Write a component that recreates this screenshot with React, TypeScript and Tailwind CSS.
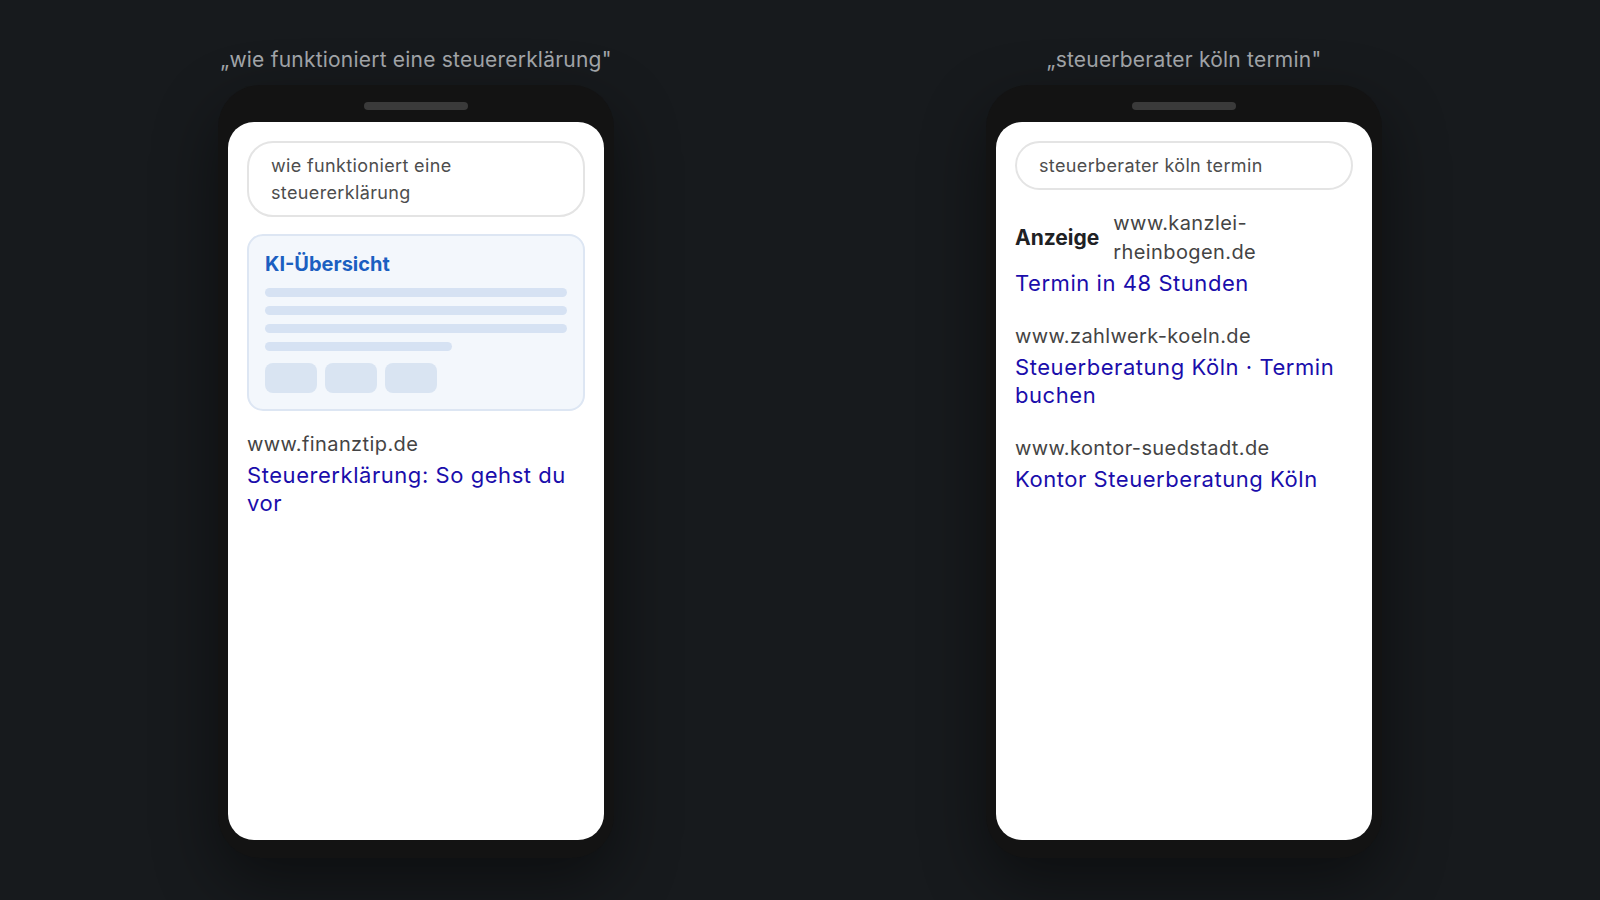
import type { ReactNode } from 'react';

type Result = {
  url: string;
  title: string;
};

const organic: Result[] = [
  { url: 'www.zahlwerk-koeln.de', title: 'Steuerberatung Köln · Termin buchen' },
  { url: 'www.kontor-suedstadt.de', title: 'Kontor Steuerberatung Köln' },
];

function Phone({ query, children }: { query: string; children: ReactNode }) {
  return (
    <div className="flex flex-col items-center">
      <p className="text-[21px] leading-7 tracking-[0.01em] text-[#a4a7ab]">„{query}"</p>
      <div className="mt-[11px] w-[396px] rounded-[42px] bg-[#131313] px-[10px] pt-[17px] pb-[18px] shadow-[0_24px_64px_rgba(0,0,0,0.45)]">
        <div className="mx-auto h-2 w-[104px] rounded-full bg-[#3a3a3a]" />
        <div className="mt-3 h-[718px] rounded-[26px] bg-white px-[19px] pt-[19px]">
          <div className="rounded-[26px] border-2 border-[#e4e4e4] px-[22px] py-[9px] text-[18px] leading-[27px] tracking-[0.02em] text-[#4d4d4d]">
            {query}
          </div>
          {children}
        </div>
      </div>
    </div>
  );
}

function ResultItem({ url, title }: Result) {
  return (
    <div>
      <div className="text-[20px] leading-7 tracking-[0.02em] text-[#444]">{url}</div>
      <div className="mt-[3px] text-[22px] leading-7 tracking-[0.025em] text-[#1a0dab]">{title}</div>
    </div>
  );
}

export default function App() {
  return (
    <div className="min-h-screen w-full bg-[#171a1d] font-['Inter',sans-serif]">
      <div className="mx-auto grid max-w-[1536px] grid-cols-2 pt-[46px]">
        <Phone query="wie funktioniert eine steuererklärung">
          {/* AI overview placeholder */}
          <div className="mt-[17px] rounded-2xl border-2 border-[#dde6f3] bg-[#f3f7fc] px-4 pt-3.5 pb-4">
            <div className="text-[20px] font-bold leading-7 text-[#1b5fc1]">KI-Übersicht</div>
            <div className="mt-[10px] flex flex-col gap-[9px]">
              <div className="h-[9px] rounded-full bg-[#d6e2f3]" />
              <div className="h-[9px] rounded-full bg-[#d6e2f3]" />
              <div className="h-[9px] rounded-full bg-[#d6e2f3]" />
              <div className="h-[9px] w-[62%] rounded-full bg-[#d6e2f3]" />
            </div>
            <div className="mt-3 flex gap-2">
              <div className="h-[30px] w-[52px] rounded-lg bg-[#d9e4f2]" />
              <div className="h-[30px] w-[52px] rounded-lg bg-[#d9e4f2]" />
              <div className="h-[30px] w-[52px] rounded-lg bg-[#d9e4f2]" />
            </div>
          </div>
          <div className="mt-[19px]">
            <ResultItem url="www.finanztip.de" title="Steuererklärung: So gehst du vor" />
          </div>
        </Phone>

        <Phone query="steuerberater köln termin">
          <div className="mt-[19px] flex flex-col gap-[25px]">
            <div>
              <div className="flex items-center gap-3.5">
                <span className="text-[21px] font-bold text-[#202124]">Anzeige</span>
                <span className="min-w-0 text-[20px] leading-[29px] tracking-[0.02em] text-[#444]">www.kanzlei-rheinbogen.de</span>
              </div>
              <div className="mt-[2px] text-[22px] leading-7 tracking-[0.025em] text-[#1a0dab]">Termin in 48 Stunden</div>
            </div>
            {organic.map((r) => (
              <ResultItem key={r.url} {...r} />
            ))}
          </div>
        </Phone>
      </div>
    </div>
  );
}
